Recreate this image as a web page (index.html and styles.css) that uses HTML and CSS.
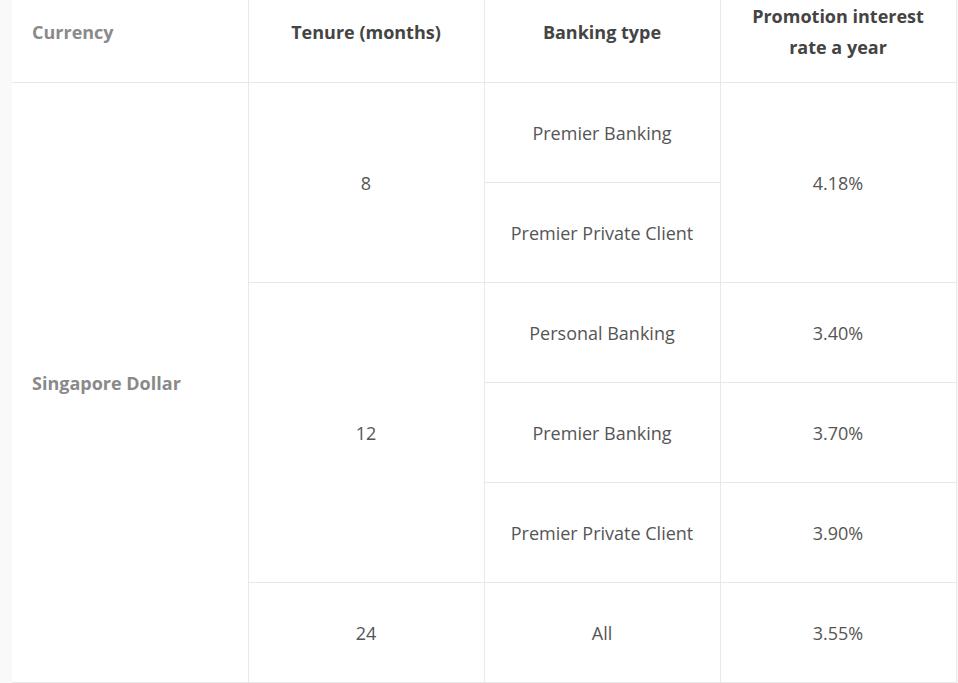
FILE: index.html
```html
<!DOCTYPE html>
<html lang="en">
<head>
<meta charset="utf-8">
<title>Promotion rates</title>
<link rel="stylesheet" href="styles.css">
</head>
<body>
<div class="wrap">
<table class="rates">
  <colgroup>
    <col class="c"><col class="c"><col class="c"><col class="c">
  </colgroup>
  <thead>
    <tr>
      <th class="muted left">Currency</th>
      <th>Tenure (months)</th>
      <th>Banking type</th>
      <th>Promotion interest<br>rate a year</th>
    </tr>
  </thead>
  <tbody>
    <tr>
      <td rowspan="6" class="muted left strong">Singapore Dollar</td>
      <td rowspan="2">8</td>
      <td>Premier Banking</td>
      <td rowspan="2">4.18%</td>
    </tr>
    <tr>
      <td>Premier Private Client</td>
    </tr>
    <tr>
      <td rowspan="3">12</td>
      <td>Personal Banking</td>
      <td>3.40%</td>
    </tr>
    <tr>
      <td>Premier Banking</td>
      <td>3.70%</td>
    </tr>
    <tr>
      <td>Premier Private Client</td>
      <td>3.90%</td>
    </tr>
    <tr>
      <td>24</td>
      <td>All</td>
      <td>3.55%</td>
    </tr>
  </tbody>
</table>
</div>
</body>
</html>
```
FILE: styles.css
```css
html, body {
  margin: 0;
  padding: 0;
  background: #f9f9f9;
}
.wrap {
  padding: 0 2px 0 12px;
}
.rates {
  margin-top: -20px;
  width: 944px;
  border-collapse: collapse;
  table-layout: fixed;
  background: #fff;
  font-family: "Open Sans", "Liberation Sans", sans-serif;
  font-size: 18px;
  color: #555;
}
.rates .c {
  width: 236px;
}
.rates th,
.rates td {
  border: 1px solid #e8e8e8;
  text-align: center;
  vertical-align: middle;
  padding: 0 20px;
}
.rates tr > :first-child {
  border-left: none;
}
.rates th {
  font-size: 18px;
  font-weight: 700;
  color: #444;
  line-height: 31px;
  padding-top: 21px;
  padding-bottom: 19px;
  border-top: none;
}
.rates tbody td {
  height: 99px;
  line-height: 24px;
}
.rates .muted {
  color: #8a8a8a;
}
.rates .left {
  text-align: left;
}
.rates .strong {
  font-weight: 700;
  font-size: 18px;
}
```
